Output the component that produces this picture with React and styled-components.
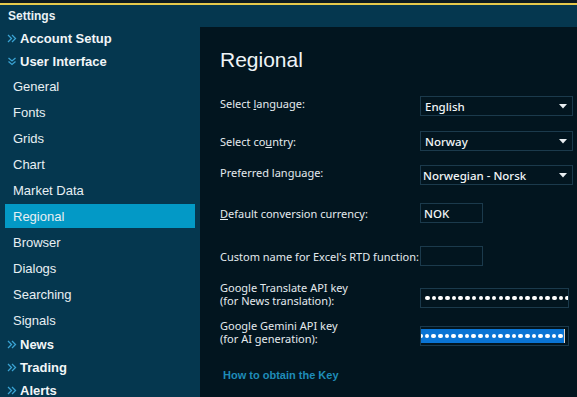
import React from "react";
import styled, { createGlobalStyle } from "styled-components";

const Global = createGlobalStyle`
  html, body { margin: 0; padding: 0; background: #05374f; }
  body { width: 577px; height: 397px; overflow: hidden; font-family: "Liberation Sans", Arial, sans-serif; }
  * { box-sizing: border-box; }
`;

const Frame = styled.div`
  width: 577px;
  height: 397px;
  display: flex;
  flex-direction: column;
  background: #05374f;
  overflow: hidden;
`;

const TopStrip = styled.div`
  height: 5px;
  flex: none;
  background: #0e1a21;
  border-bottom: 2px solid #e6c94c;
`;

const Header = styled.div`
  height: 22px;
  flex: none;
  display: flex;
  align-items: center;
  padding-left: 8px;
  color: #e9f1f5;
  font-weight: bold;
  font-size: 12px;
`;

const Body = styled.div`
  flex: 1;
  display: flex;
  min-height: 0;
`;

const Sidebar = styled.nav`
  width: 200px;
  flex: none;
  display: flex;
  flex-direction: column;
`;

const GroupRow = styled.div`
  height: 23px;
  flex: none;
  display: flex;
  align-items: center;
  gap: 3px;
  padding-left: 7px;
  color: #f2f6f8;
  font-weight: bold;
  font-size: 13px;
`;

const SubRow = styled.div`
  height: 26px;
  flex: none;
  padding: 1px 5px;
  display: flex;
`;

const SubLabel = styled.div`
  flex: 1;
  display: flex;
  align-items: center;
  padding-left: 8px;
  font-size: 13px;
  color: #e8eff3;
  background: ${(p) => (p.$active ? "#0399c6" : "transparent")};
`;

const Main = styled.main`
  flex: 1;
  background: #02151f;
  padding: 20px 0 0 20px;
  display: flex;
  flex-direction: column;
`;

const Title = styled.h1`
  margin: 0;
  height: 26px;
  font-weight: normal;
  font-size: 21px;
  color: #eef3f6;
  line-height: 26px;
`;

const Row = styled.div`
  height: 20px;
  flex: none;
  display: flex;
  align-items: center;
  margin-top: ${(p) => p.$mt}px;
`;

const Label = styled.div`
  width: 200px;
  flex: none;
  font-family: "Noto Sans", "Open Sans", sans-serif;
  font-size: 11px;
  line-height: 13px;
  color: #e4eaee;
  transform: translateY(${(p) => p.$dy || 0}px);
  u { text-decoration: underline; text-underline-offset: 1px; }
`;

const SelectBox = styled.div`
  width: 153px;
  height: 20px;
  border: 1px solid #1b3a4c;
  display: flex;
  align-items: center;
  justify-content: space-between;
  padding: 0 5px 0 ${(p) => p.$pl || 4}px;
  font-family: "Noto Sans", "Open Sans", sans-serif;
  font-size: 11.5px;
  font-weight: 500;
  color: #f1f5f7;
`;

const TextBox = styled.div`
  width: ${(p) => p.$w}px;
  height: 20px;
  border: 1px solid #1b3a4c;
  display: flex;
  align-items: center;
  justify-content: ${(p) => (p.$end ? "flex-end" : "flex-start")};
  padding: 0 3px;
  overflow: hidden;
  font-family: "Noto Sans", "Open Sans", sans-serif;
  font-size: 11.5px;
  font-weight: 500;
  color: #f1f5f7;
`;

const Dots = styled.span`
  flex: none;
  white-space: nowrap;
  display: flex;
  gap: 2.1px;
  height: 14px;
  align-items: center;
  padding: 0 1px;
  background: ${(p) => (p.$selected ? "#0a74d4" : "transparent")};
  border-right: ${(p) => (p.$selected ? "1px solid #e9d6c4" : "none")};
`;

const Dot = styled.i`
  width: 4.6px;
  height: 4.6px;
  border-radius: 50%;
  background: #ffffff;
  flex: none;
`;

const Link = styled.a`
  margin: 23px 0 0 3px;
  font-size: 11px;
  font-weight: bold;
  color: #1f8cb8;
  text-decoration: none;
  align-self: flex-start;
`;

const Chevrons = ({ down }) => (
  <svg width="10" height="9" viewBox="0 0 10 9" style={{ flex: "none" }}>
    {down ? (
      <g fill="none" stroke="#3aa3d3" strokeWidth="1.3">
        <path d="M1.5 1 L5 4 L8.5 1" />
        <path d="M1.5 4.5 L5 7.5 L8.5 4.5" />
      </g>
    ) : (
      <g fill="none" stroke="#3aa3d3" strokeWidth="1.3">
        <path d="M1 1 L4.5 4.5 L1 8" />
        <path d="M5 1 L8.5 4.5 L5 8" />
      </g>
    )}
  </svg>
);

const Arrow = () => (
  <svg width="8" height="5" viewBox="0 0 8 5">
    <path d="M0 0 H8 L4 4.5 Z" fill="#e9eef1" />
  </svg>
);

const DotRow = ({ n, selected }) => (
  <Dots $selected={selected}>
    {Array.from({ length: n }).map((_, i) => (
      <Dot key={i} />
    ))}
  </Dots>
);

const subItems = [
  "General",
  "Fonts",
  "Grids",
  "Chart",
  "Market Data",
  "Regional",
  "Browser",
  "Dialogs",
  "Searching",
  "Signals",
];

export default function App() {
  return (
    <Frame>
      <Global />
      <TopStrip />
      <Header>Settings</Header>
      <Body>
        <Sidebar>
          <GroupRow>
            <Chevrons />
            Account Setup
          </GroupRow>
          <GroupRow>
            <Chevrons down />
            User Interface
          </GroupRow>
          {subItems.map((s) => (
            <SubRow key={s}>
              <SubLabel $active={s === "Regional"}>{s}</SubLabel>
            </SubRow>
          ))}
          <GroupRow>
            <Chevrons />
            News
          </GroupRow>
          <GroupRow>
            <Chevrons />
            Trading
          </GroupRow>
          <GroupRow>
            <Chevrons />
            Alerts
          </GroupRow>
        </Sidebar>
        <Main>
          <Title>Regional</Title>
          <Row $mt={23}>
            <Label $dy={-3}>
              Select <u>l</u>anguage:
            </Label>
            <SelectBox>
              English
              <Arrow />
            </SelectBox>
          </Row>
          <Row $mt={15}>
            <Label>
              Select co<u>u</u>ntry:
            </Label>
            <SelectBox>
              Norway
              <Arrow />
            </SelectBox>
          </Row>
          <Row $mt={14}>
            <Label $dy={-3}>Preferred language:</Label>
            <SelectBox $pl={2}>
              Norwegian - Norsk
              <Arrow />
            </SelectBox>
          </Row>
          <Row $mt={18}>
            <Label>
              <u>D</u>efault conversion currency:
            </Label>
            <TextBox $w={63}>NOK</TextBox>
          </Row>
          <Row $mt={23}>
            <Label>Custom name for Excel's RTD function:</Label>
            <TextBox $w={63} />
          </Row>
          <Row $mt={22}>
            <Label $dy={-4}>
              Google Translate API key
              <br />
              (for News translation):
            </Label>
            <TextBox $w={149}>
              <DotRow n={23} />
            </TextBox>
          </Row>
          <Row $mt={18}>
            <Label $dy={-4}>
              Google Gemini API key
              <br />
              (for AI generation):
            </Label>
            <TextBox $w={149} $end>
              <DotRow n={23} selected />
            </TextBox>
          </Row>
          <Link href="#">How to obtain the Key</Link>
        </Main>
      </Body>
    </Frame>
  );
}
